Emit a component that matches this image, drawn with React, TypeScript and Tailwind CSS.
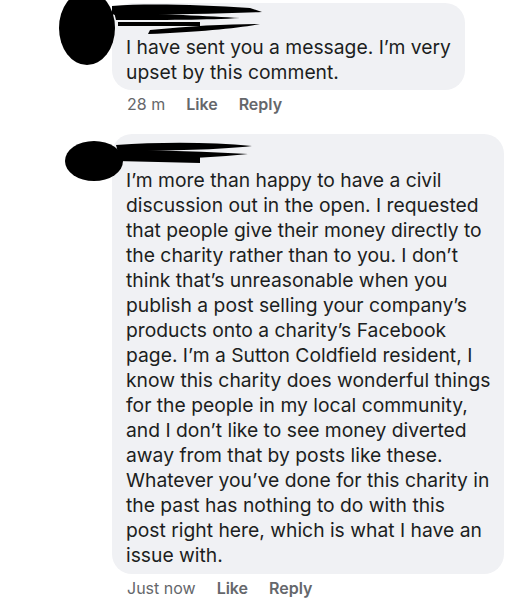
import React from "react";

const first = ["I have sent you a message. I\u2019m very", "upset by this comment."];

const second = [
  "I\u2019m more than happy to have a civil",
  "discussion out in the open. I requested",
  "that people give their money directly to",
  "the charity rather than to you. I don\u2019t",
  "think that\u2019s unreasonable when you",
  "publish a post selling your company\u2019s",
  "products onto a charity\u2019s Facebook",
  "page. I\u2019m a Sutton Coldfield resident, I",
  "know this charity does wonderful things",
  "for the people in my local community,",
  "and I don\u2019t like to see money diverted",
  "away from that by posts like these.",
  "Whatever you\u2019ve done for this charity in",
  "the past has nothing to do with this",
  "post right here, which is what I have an",
  "issue with.",
];

function Footer({ time }: { time: string }) {
  return (
    <div className="flex items-center pl-[15px] mt-[3px] text-[16px] leading-[22px] text-[#65676b]">
      <span>{time}</span>
      <span className="font-semibold ml-[21px]">Like</span>
      <span className="font-semibold ml-[21px]">Reply</span>
    </div>
  );
}

export default function App() {
  return (
    <div
      className="w-[522px] h-[600px] bg-white overflow-hidden relative"
      style={{ fontFamily: "Inter, 'Noto Sans', sans-serif" }}
    >
      {/* first comment */}
      <div className="pl-[112px] pt-[3px]">
        <div className="w-[353px] bg-[#f0f1f4] rounded-[20px] pt-[32px] pb-[5px] px-[14px] text-[19.3px] leading-[25px] text-[#1c1e21]">
          {first.map((l) => (
            <div key={l} className="whitespace-nowrap">{l}</div>
          ))}
        </div>
        <Footer time="28 m" />
      </div>

      {/* second comment */}
      <div className="pl-[112px] mt-[19px]">
        <div className="w-[392px] bg-[#f0f1f4] rounded-[20px] pt-[34px] pb-[6px] px-[14px] text-[19.3px] leading-[25px] text-[#1c1e21]">
          {second.map((l) => (
            <div key={l} className="whitespace-nowrap">{l}</div>
          ))}
        </div>
        <Footer time="Just now" />
      </div>

      {/* redaction marks over avatars and names */}
      <svg className="absolute left-0 top-0 pointer-events-none" width="522" height="600">
        <ellipse cx="87" cy="28" rx="28" ry="37" fill="#000" />
        <path d="M112 6 C150 3 200 5 250 8 L262 12 C220 14 170 14 118 16 L112 14 Z" fill="#000" />
        <path d="M114 12 C160 14 210 16 240 18 C210 20 160 20 116 20 Z" fill="#000" />
        <path d="M150 30 C190 26 230 24 260 24 C240 28 200 32 148 34 Z" fill="#000" />
        <path d="M118 22 L200 22 L200 26 L118 26 Z" fill="#000" />
        <ellipse cx="94" cy="161" rx="29" ry="20" fill="#000" />
        <path d="M116 145 C160 142 210 142 252 146 C220 150 170 150 118 152 Z" fill="#000" />
        <path d="M118 150 C160 150 210 152 248 154 C210 158 160 160 120 158 Z" fill="#000" />
        <path d="M116 156 L200 156 L200 163 L116 161 Z" fill="#000" />
      </svg>
    </div>
  );
}
